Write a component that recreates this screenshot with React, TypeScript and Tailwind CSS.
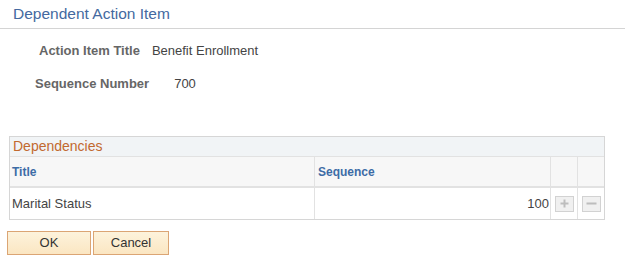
import React from 'react';

const font = { fontFamily: '"Liberation Sans", Arial, sans-serif' };

const rows = [{ title: 'Marital Status', sequence: 100 }];

const PlusIcon = () => (
  <svg width="9" height="9" viewBox="0 0 9 9">
    <path d="M4.5 0.5v8M0.5 4.5h8" stroke="#bdbdbd" strokeWidth="2" />
  </svg>
);

const MinusIcon = () => (
  <svg width="11" height="9" viewBox="0 0 11 9">
    <path d="M0.5 4.5h10" stroke="#bdbdbd" strokeWidth="2" />
  </svg>
);

export default function App() {
  return (
    <div className="w-[625px] h-[268px] bg-white text-[13px] text-[#333]" style={font}>
      {/* Page title */}
      <div className="h-[29px] pl-[13px] pt-[4px] border-b border-[#d4d4d4] text-[15.5px] text-[#4469a0] leading-[20px]">
        Dependent Action Item
      </div>

      {/* Header fields */}
      <div className="pt-[14px]">
        <div className="flex items-center h-[16px]">
          <span className="ml-[39px] font-bold text-[#666]">Action Item Title</span>
          <span className="ml-[12px] text-[#444]">Benefit Enrollment</span>
        </div>
        <div className="flex items-center h-[16px] mt-[17px]">
          <span className="ml-[35px] font-bold text-[#666]">Sequence Number</span>
          <span className="ml-[25px] text-[#444]">700</span>
        </div>
      </div>

      {/* Dependencies grid */}
      <div className="ml-[9px] mt-[44px] w-[596px] border border-[#d6d6d6]">
        <div className="h-[20px] bg-[#f1f4f6] border-b border-[#e2e2e2] pl-[3px] text-[14px] leading-[19px] text-[#c2692f]">
          Dependencies
        </div>
        <div className="flex h-[31px] bg-[#f7f7f7] border-b-2 border-[#e2e2e2] text-[12px] font-bold text-[#3d6ca6]">
          <div className="w-[305px] pl-[2px] flex items-center border-r border-[#e2e2e2]">Title</div>
          <div className="w-[236px] pl-[3px] flex items-center border-r border-[#e2e2e2]">Sequence</div>
          <div className="w-[27px] border-r border-[#e2e2e2]" />
          <div className="flex-1" />
        </div>
        {rows.map(r => (
          <div key={r.title} className="flex h-[31px] bg-white text-[#444]">
            <div className="w-[305px] pl-[2px] flex items-center border-r border-[#e2e2e2]">{r.title}</div>
            <div className="w-[236px] pr-[1px] flex items-center justify-end border-r border-[#e2e2e2]">
              {r.sequence}
            </div>
            <div className="w-[27px] flex items-center justify-center border-r border-[#e2e2e2]">
              <div className="w-[19px] h-[16px] flex items-center justify-center bg-[#f0f0f0] border border-[#d2d2d2]">
                <PlusIcon />
              </div>
            </div>
            <div className="flex-1 flex items-center justify-center">
              <div className="w-[19px] h-[16px] flex items-center justify-center bg-[#f0f0f0] border border-[#d2d2d2]">
                <MinusIcon />
              </div>
            </div>
          </div>
        ))}
      </div>

      {/* Buttons */}
      <div className="flex gap-[2px] ml-[7px] mt-[11px]">
        <button className="w-[84px] h-[24px] border border-[#dba574] bg-gradient-to-b from-[#fdf3dc] to-[#fbe6c2] text-[13px] text-[#333]">
          OK
        </button>
        <button className="w-[76px] h-[24px] border border-[#dba574] bg-gradient-to-b from-[#fdf3dc] to-[#fbe6c2] text-[13px] text-[#333]">
          Cancel
        </button>
      </div>
    </div>
  );
}
